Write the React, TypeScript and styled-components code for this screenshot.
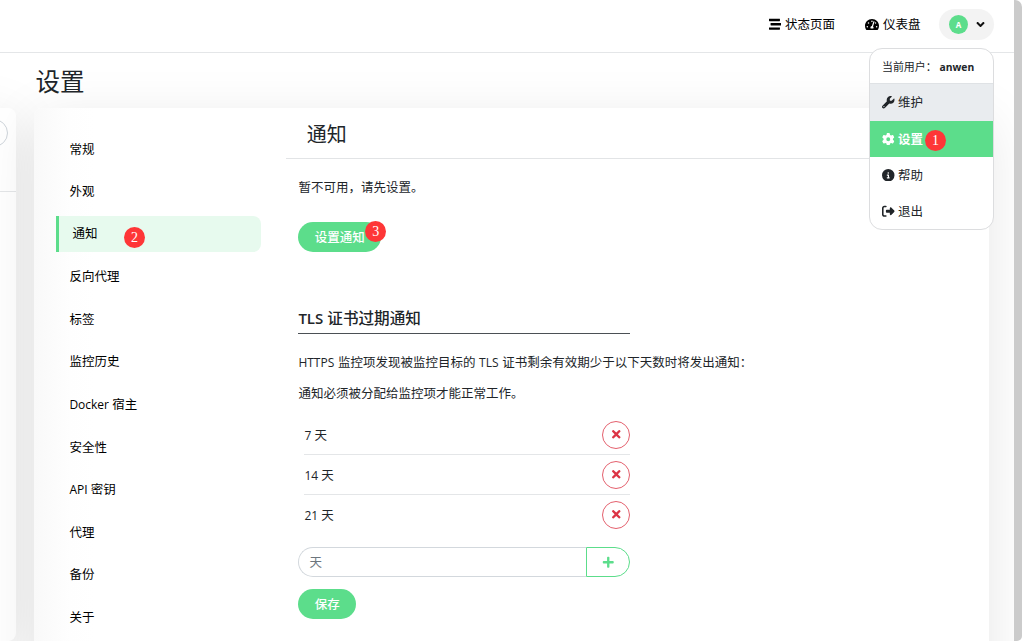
import React from "react";
import styled, { createGlobalStyle, css } from "styled-components";
import {
  FaStream,
  FaTachometerAlt,
  FaAngleDown,
  FaTimes,
  FaPlus,
} from "react-icons/fa";
import { FaWrench, FaGear, FaCircleInfo, FaRightFromBracket } from "react-icons/fa6";

const GREEN = "#5cdd8b";

const Global = createGlobalStyle`
  * { box-sizing: border-box; }
  body {
    margin: 0;
    background: #fff;
    color: #212529;
    font-family: "Open Sans", "Noto Sans CJK SC", sans-serif;
    font-size: 12.5px;
    line-height: 19px;
    overflow: hidden;
  }
  button, input { font: inherit; }
`;

const Shell = styled.div`
  display: flex;
  width: 1024px;
  height: 641px;
  overflow: hidden;
`;
const Page = styled.div`
  width: 1014px;
  height: 641px;
  display: flex;
  flex-direction: column;
  overflow: hidden;
`;
const Scrollbar = styled.div`
  width: 8px;
  height: 641px;
  background: #cbcbcb;
  border-radius: 0 7px 5px 0;
`;

const Header = styled.header`
  position: relative;
  z-index: 2;
  flex: none;
  height: 53px;
  padding: 0 20px 4px 0;
  border-bottom: 1px solid #e4e6e8;
  background: #fff;
  display: flex;
  align-items: center;
  justify-content: flex-end;
`;
const HeaderLink = styled.a<{ $gap: number }>`
  display: flex;
  align-items: center;
  gap: 3.5px;
  height: 30px;
  margin-right: ${(p) => p.$gap}px;
  color: #000;
  svg { font-size: 12.5px; }
`;
const GaugeIcon = styled(FaTachometerAlt)`
  && { width: 14px; height: 13px; }
`;
const Profile = styled.div`
  display: flex;
  align-items: center;
  gap: 6px;
  width: 55px;
  height: 31px;
  padding-left: 10px;
  border-radius: 16px;
  background: #f3f3f3;
  svg { width: 11px; height: 13px; margin-left: 1px; color: #111; }
`;
const Avatar = styled.span`
  width: 19px;
  height: 19px;
  border-radius: 50%;
  background: ${GREEN};
  color: #fff;
  font-size: 8px;
  font-weight: 700;
  line-height: 19px;
  text-align: center;
`;

const Menu = styled.div`
  position: absolute;
  top: 48px;
  right: 20px;
  width: 125px;
  height: 182px;
  border: 1px solid #dcdddf;
  border-radius: 13px;
  background: #fff;
  overflow: hidden;
`;
const MenuTitle = styled.div`
  height: 34px;
  padding: 8px 0 0 12px;
  font-size: 10.95px;
  white-space: pre;
  b { font-weight: 700; font-size: 10.3px; }
`;
const MenuItem = styled.div<{ $h: number; $tone?: "hover" | "active" }>`
  display: flex;
  align-items: center;
  gap: 3.5px;
  height: ${(p) => p.$h}px;
  padding-left: 12px;
  svg { font-size: 12.5px; }
  ${(p) => p.$tone === "hover" && css`background: #e9ecef; border-top: 1px solid #dfe2e5;`}
  ${(p) => p.$tone === "active" && css`background: ${GREEN}; color: #fff; font-weight: 600;`}
`;

const Marker = styled.span<{ $x: number; $y: number }>`
  position: absolute;
  left: ${(p) => p.$x}px;
  top: ${(p) => p.$y}px;
  width: 21px;
  height: 21px;
  border-radius: 50%;
  background: #fe3637;
  color: #fff;
  font: 14px/21px "Liberation Serif", serif;
  text-align: center;
`;

const Main = styled.main`
  flex: 1;
  display: flex;
  gap: 18.4px;
`;
const ListCard = styled.aside`
  flex: none;
  width: 316px;
  height: 533px;
  margin: 55px 0 0 -300px;
  padding-top: 11px;
  border-radius: 8px;
  background: #fff;
  box-shadow: 0 12px 55px rgba(0, 0, 0, 0.11);
  display: flex;
  flex-direction: column;
  align-items: flex-end;
`;
const SearchEnd = styled.div`
  width: 120px;
  height: 28px;
  margin-right: 8px;
  border: 1px solid #ced4da;
  border-radius: 14px;
  background: #fff;
`;
const ListRule = styled.div`
  width: 300px;
  height: 1px;
  margin-top: 43.5px;
  background: #e4e6e8;
`;
const Column = styled.section`
  width: 955px;
  display: flex;
  flex-direction: column;
`;
const Title = styled.h1`
  height: 55px;
  margin: 0;
  padding: 11px 0 0 1px;
  font-size: 24.5px;
  font-weight: 400;
  line-height: 36px;
`;
const Card = styled.div`
  flex: none;
  height: 620px;
  padding: 20px 0 0 22px;
  border-radius: 8px;
  background: linear-gradient(90deg, #f9f9f9, #fefefe 36px, #fff 60px);
  box-shadow: 0 12px 55px rgba(0, 0, 0, 0.1);
  display: flex;
  gap: 25px;
`;
const Nav = styled.nav`
  width: 204.9px;
  display: flex;
  flex-direction: column;
  gap: 6.2px;
  padding-top: 2.9px;
`;
const NavItem = styled.a<{ $active?: boolean }>`
  position: relative;
  display: flex;
  align-items: center;
  gap: 3.3px;
  height: 36.4px;
  padding-left: 13px;
  color: #000;
  ${(p) => p.$active && css`
    padding-bottom: 1px;
    border-left: 3px solid ${GREEN};
    border-radius: 0 8px 8px 0;
    background: #e7faee;
  `}
`;
const Latin = styled.span`
  font-size: 12px;
`;

const Content = styled.div`
  position: relative;
  width: 703px;
`;
const SectionTitle = styled.div`
  height: 41px;
  margin-top: -10px;
  padding-left: 20.5px;
  border-bottom: 1px solid #e2e4e6;
  font-size: 20px;
  line-height: 33px;
`;
const Body = styled.div`
  display: flex;
  flex-direction: column;
  align-items: flex-start;
  padding: 19px 0 0 12.1px;
`;
const Text = styled.p<{ $top?: number }>`
  margin: ${(p) => p.$top ?? 0}px 0 0;
  height: 19px;
  white-space: nowrap;
`;
const WideText = styled(Text)`
  word-spacing: 0.4px;
`;
const Pill = styled.button<{ $w: number; $top: number }>`
  width: ${(p) => p.$w}px;
  height: 30px;
  margin-top: ${(p) => p.$top}px;
  padding: 0;
  border: 0;
  border-radius: 15px;
  background: ${GREEN};
  color: #fff;
  font-weight: 500;
`;
const SubTitle = styled.h5`
  width: 331.5px;
  height: 30px;
  margin: 52px 0 0;
  border-bottom: 1px solid #4b5055;
  font-size: 15.6px;
  font-weight: 500;
  line-height: 28px;
  span { font-size: 15px; font-weight: 600; }
`;
const Days = styled.div`
  width: 325.5px;
  margin: 12px 0 0 6px;
`;
const DayRow = styled.div`
  display: flex;
  align-items: center;
  justify-content: space-between;
  height: 40px;
  border-bottom: 1px solid #e4e6e8;
  &:last-child { border-bottom-color: transparent; }
  > span { padding-top: 1.5px; }
`;
const Remove = styled.button`
  display: grid;
  place-items: center;
  width: 28px;
  height: 28px;
  padding: 0;
  border: 1px solid #e4606d;
  border-radius: 50%;
  background: transparent;
  color: #dc3545;
  svg { font-size: 12.5px; }
`;
const InputGroup = styled.div`
  display: flex;
  width: 332px;
  height: 30px;
  margin-top: 12px;
`;
const DayInput = styled.input`
  width: 288px;
  padding: 0 10px;
  border: 1px solid #d3d8dd;
  border-right: 0;
  border-radius: 15px 0 0 15px;
  outline: 0;
  &::placeholder { color: #6c757d; opacity: 1; }
`;
const Add = styled.button`
  display: grid;
  place-items: center;
  width: 44px;
  padding: 0;
  border: 1px solid ${GREEN};
  border-radius: 0 15px 15px 0;
  background: #fff;
  color: ${GREEN};
  svg { font-size: 12.5px; }
`;

const navItems: { latin?: string; label: string; active?: boolean }[] = [
  { label: "常规" },
  { label: "外观" },
  { label: "通知", active: true },
  { label: "反向代理" },
  { label: "标签" },
  { label: "监控历史" },
  { latin: "Docker", label: "宿主" },
  { label: "安全性" },
  { latin: "API", label: "密钥" },
  { label: "代理" },
  { label: "备份" },
  { label: "关于" },
];

export default function App() {
  return (
    <Shell>
      <Global />
      <Page>
        <Header>
          <HeaderLink $gap={30.5}><FaStream />状态页面</HeaderLink>
          <HeaderLink $gap={18.5}><GaugeIcon />仪表盘</HeaderLink>
          <Profile><Avatar>A</Avatar><FaAngleDown /></Profile>
          <Menu>
            <MenuTitle>当前用户： <b>anwen</b></MenuTitle>
            <MenuItem $h={38} $tone="hover"><FaWrench />维护</MenuItem>
            <MenuItem $h={36} $tone="active"><FaGear />设置</MenuItem>
            <MenuItem $h={36}><FaCircleInfo />帮助</MenuItem>
            <MenuItem $h={37}><FaRightFromBracket />退出</MenuItem>
            <Marker $x={55} $y={81}>1</Marker>
          </Menu>
        </Header>
        <Main>
          <ListCard>
            <SearchEnd />
            <ListRule />
          </ListCard>
          <Column>
            <Title>设置</Title>
            <Card>
              <Nav>
                {navItems.map((n) => (
                  <NavItem key={n.label + (n.latin ?? "")} $active={n.active}>
                    {n.latin && <Latin>{n.latin}</Latin>}
                    {n.label}
                    {n.active && <Marker $x={64.5} $y={10.5}>2</Marker>}
                  </NavItem>
                ))}
              </Nav>
              <Content>
                <SectionTitle>通知</SectionTitle>
                <Body>
                  <Text>暂不可用，请先设置。</Text>
                  <Pill $w={83} $top={25}>设置通知</Pill>
                  <SubTitle><span>TLS</span> 证书过期通知</SubTitle>
                  <WideText $top={19}>
                    <Latin>HTTPS</Latin> 监控项发现被监控目标的 <Latin>TLS</Latin> 证书剩余有效期少于以下天数时将发出通知：
                  </WideText>
                  <Text $top={12}>通知必须被分配给监控项才能正常工作。</Text>
                  <Days>
                    {[7, 14, 21].map((d) => (
                      <DayRow key={d}>
                        <span><Latin>{d}</Latin> 天</span>
                        <Remove aria-label="删除"><FaTimes /></Remove>
                      </DayRow>
                    ))}
                  </Days>
                  <InputGroup>
                    <DayInput placeholder="天" />
                    <Add aria-label="添加"><FaPlus /></Add>
                  </InputGroup>
                  <Pill $w={58} $top={12}>保存</Pill>
                </Body>
                <Marker $x={79} $y={93}>3</Marker>
              </Content>
            </Card>
          </Column>
        </Main>
      </Page>
      <Scrollbar />
    </Shell>
  );
}
